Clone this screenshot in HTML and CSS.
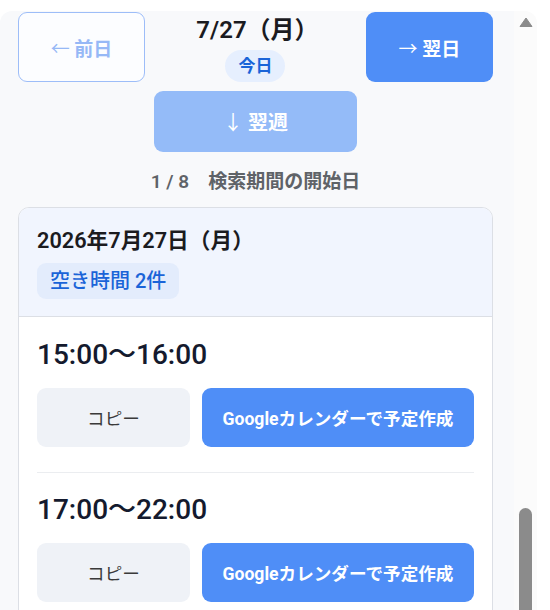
FILE: index.html
```html
<!DOCTYPE html>
<html lang="ja">
<head>
<meta charset="utf-8">
<title>空き時間</title>
<link rel="stylesheet" href="styles.css">
</head>
<body>
<div class="frame">
  <main class="panel">
    <div class="nav">
      <button class="btn-prev"><span class="arr">←</span> 前日</button>
      <div class="today-box">
        <div class="cur-date">7/27（月）</div>
        <span class="today-pill">今日</span>
      </div>
      <button class="btn-next"><span class="arr">→</span> 翌日</button>
    </div>
    <div class="week-row">
      <button class="btn-week"><span class="arr">↓</span> 翌週</button>
    </div>
    <p class="pager">1 / 8　検索期間の開始日</p>
    <section class="card">
      <header class="card-head">
        <h2 class="day-title">2026年7月27日（月）</h2>
        <span class="count-badge">空き時間 2件</span>
      </header>
      <div class="slot">
        <div class="slot-time">15:00〜16:00</div>
        <div class="slot-actions">
          <button class="btn-copy">コピー</button>
          <button class="btn-gcal">Googleカレンダーで予定作成</button>
        </div>
      </div>
      <div class="slot">
        <div class="slot-time">17:00〜22:00</div>
        <div class="slot-actions">
          <button class="btn-copy">コピー</button>
          <button class="btn-gcal">Googleカレンダーで予定作成</button>
        </div>
      </div>
    </section>
  </main>
  <div class="scrollbar">
    <svg class="sb-arrow" width="14" height="10" viewBox="0 0 14 10"><path d="M7 1 L13 9.5 L1 9.5 Z" fill="#8b8b8b" stroke="#8b8b8b" stroke-width="1" stroke-linejoin="round"/></svg>
    <div class="sb-thumb"></div>
  </div>
</div>
</body>
</html>
```

FILE: styles.css
```css
* { box-sizing: border-box; }
html, body { margin: 0; padding: 0; background: #ffffff; }
body {
  font-family: Roboto, "Noto Sans CJK JP", sans-serif;
  overflow: hidden;
  height: 610px;
}
button { font-family: inherit; cursor: pointer; }
.arr { font-weight: 400; }
.frame {
  margin-top: 11px;
  width: 537px;
  height: 599px;
  display: flex;
  border-radius: 12px 12px 0 0;
  overflow: hidden;
}
.panel {
  width: 514px;
  background: #f8f9fb;
  padding: 1px 21px 0 18px;
}
.scrollbar {
  width: 23px;
  background: #fbfbfb;
  display: flex;
  flex-direction: column;
  align-items: center;
  padding-top: 6px;
}
.sb-arrow { display: block; }
.sb-thumb {
  margin-top: 481px;
  width: 13px;
  flex: 1;
  background: #8b8b8b;
  border-radius: 7px 7px 0 0;
}
.nav {
  display: flex;
  justify-content: space-between;
  align-items: flex-start;
}
.btn-prev, .btn-next {
  width: 127px;
  height: 70px;
  border-radius: 9px;
  font-size: 19px;
  font-weight: 700;
}
.btn-prev {
  background: #fcfdff;
  border: 1px solid #9dbdf8;
  color: #96b8f6;
}
.btn-next {
  background: #4f8ef7;
  border: none;
  color: #ffffff;
}
.today-box {
  display: flex;
  flex-direction: column;
  align-items: center;
  padding-top: 2px;
}
.cur-date {
  font-size: 24px;
  font-weight: 600;
  color: #1b1b1f;
  line-height: 32px;
  padding-left: 4px;
}
.today-pill {
  margin-top: 4px;
  height: 32px;
  line-height: 32px;
  padding: 0 13px;
  border-radius: 16px;
  background: #e6effe;
  color: #1a64d8;
  font-size: 17px;
  font-weight: 700;
}
.week-row {
  display: flex;
  justify-content: center;
  margin-top: 9px;
}
.btn-week {
  width: 203px;
  height: 61px;
  border: none;
  border-radius: 9px;
  background: #94bbf8;
  color: #ffffff;
  font-size: 20px;
  font-weight: 700;
}
.pager {
  margin: 0;
  padding-top: 17px;
  text-align: center;
  font-size: 19px;
  font-weight: 600;
  color: #5f6368;
  line-height: 26px;
}
.card {
  margin-top: 12px;
  width: 475px;
  border: 1px solid #dcdfe5;
  border-radius: 11px;
  background: #ffffff;
  overflow: hidden;
}
.card-head {
  background: #f1f5fe;
  border-bottom: 1px solid #dcdfe5;
  padding: 17px 18px 17px 18px;
}
.day-title {
  margin: 0;
  font-size: 21.7px;
  font-weight: 600;
  color: #1b1b1f;
  line-height: 32px;
}
.count-badge {
  display: inline-block;
  margin-top: 6px;
  height: 36px;
  line-height: 36px;
  padding: 0 13px;
  border-radius: 9px;
  background: #e3ecfc;
  color: #1a64d8;
  font-size: 20px;
  font-weight: 500;
}
.slot {
  margin: 0 18px;
  padding: 20px 0 25px;
}
.slot + .slot { border-top: 1px solid #ebedf0; padding-top: 19px; }
.slot-time {
  font-size: 28px;
  font-weight: 500;
  color: #141a2e;
  line-height: 36px;
}
.slot-actions {
  display: flex;
  gap: 12px;
  margin-top: 15px;
}
.btn-copy, .btn-gcal {
  height: 59px;
  border: none;
  border-radius: 9px;
  font-size: 17.6px;
}
.btn-copy {
  width: 153px;
  background: #eff2f7;
  color: #3a3a3a;
  font-weight: 400;
}
.btn-gcal {
  flex: 1;
  background: #4f8ef7;
  color: #ffffff;
  font-weight: 700;
}
```
